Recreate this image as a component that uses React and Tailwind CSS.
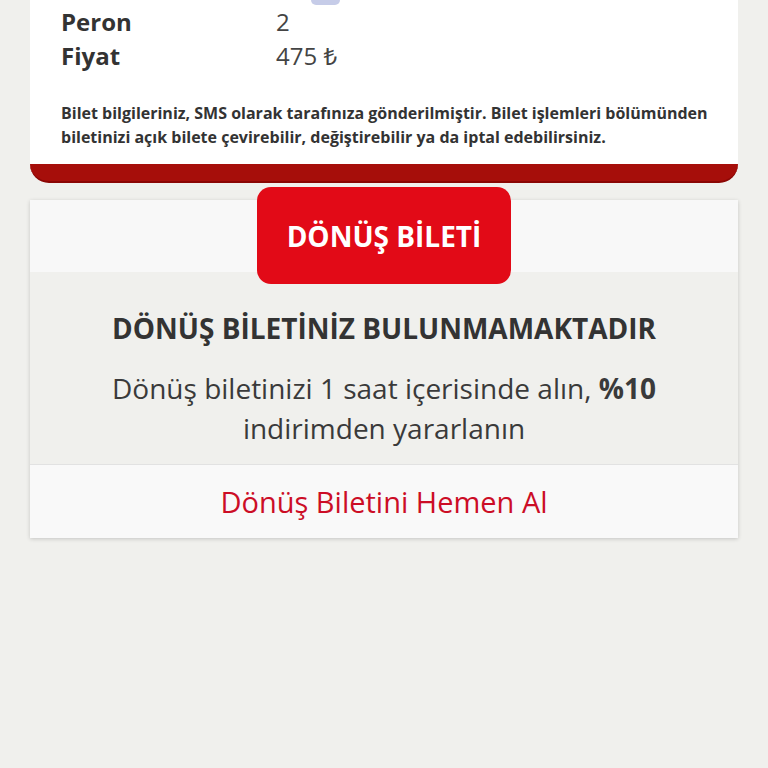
import React from 'react';

const font = { fontFamily: '"Open Sans", "Noto Sans", sans-serif' };

export default function App() {
  return (
    <div className="min-h-[768px] bg-[#f0f0ed] px-[30px] text-[#333]" style={font}>
      {/* ticket card, scrolled so only its bottom is visible */}
      <div className="bg-white">
        <div className="h-[5px] pl-[281px]">
          <div className="h-[5px] w-[29px] rounded-b-[5px] bg-[#c6cce8]" />
        </div>
        <div className="pl-[31px] pr-[16px]">
          <div className="flex text-[24px] leading-[34px]">
            <span className="w-[215px] font-bold">Peron</span>
            <span className="text-[#444]">2</span>
          </div>
          <div className="flex text-[24px] leading-[34px]">
            <span className="w-[215px] font-bold">Fiyat</span>
            <span className="text-[#444]">475 ₺</span>
          </div>
          <p className="mt-[28px] pb-[15px] text-[16px] font-bold leading-[24px]">
            Bilet bilgileriniz, SMS olarak tarafınıza gönderilmiştir. Bilet işlemleri bölümünden biletinizi açık bilete çevirebilir, değiştirebilir ya da iptal edebilirsiniz.
          </p>
        </div>
      </div>
      <div className="h-[19px] rounded-b-[20px] border-b-2 border-[#8a0604] bg-[#a60e0a]" />

      {/* return ticket card */}
      <div className="mt-[17px] bg-[#f0f0ed] shadow-[0_1px_4px_rgba(0,0,0,0.18)]">
        <div className="flex h-[72px] justify-center bg-[#f8f8f8]">
          <div className="relative z-10 -mt-[13px] flex h-[97px] w-[254px] items-center justify-center rounded-[14px] bg-[#e20a17] text-[28px] font-bold text-white">
            DÖNÜŞ BİLETİ
          </div>
        </div>
        <div className="px-[50px] pt-[36px] pb-[16px] text-center">
          <h2 className="text-[28px] font-bold leading-[40px]">DÖNÜŞ BİLETİNİZ BULUNMAMAKTADIR</h2>
          <p className="mx-auto mt-[20px] max-w-[580px] text-[28px] leading-[40px] text-[#3a3a3a]">
            Dönüş biletinizi 1 saat içerisinde alın, <span className="font-bold">%10</span> indirimden yararlanın
          </p>
        </div>
        <div className="flex h-[74px] items-center justify-center border-t border-[#e2e2e2] bg-[#f9f9f9] text-[29px] text-[#cc0d26]">
          Dönüş Biletini Hemen Al
        </div>
      </div>
    </div>
  );
}
